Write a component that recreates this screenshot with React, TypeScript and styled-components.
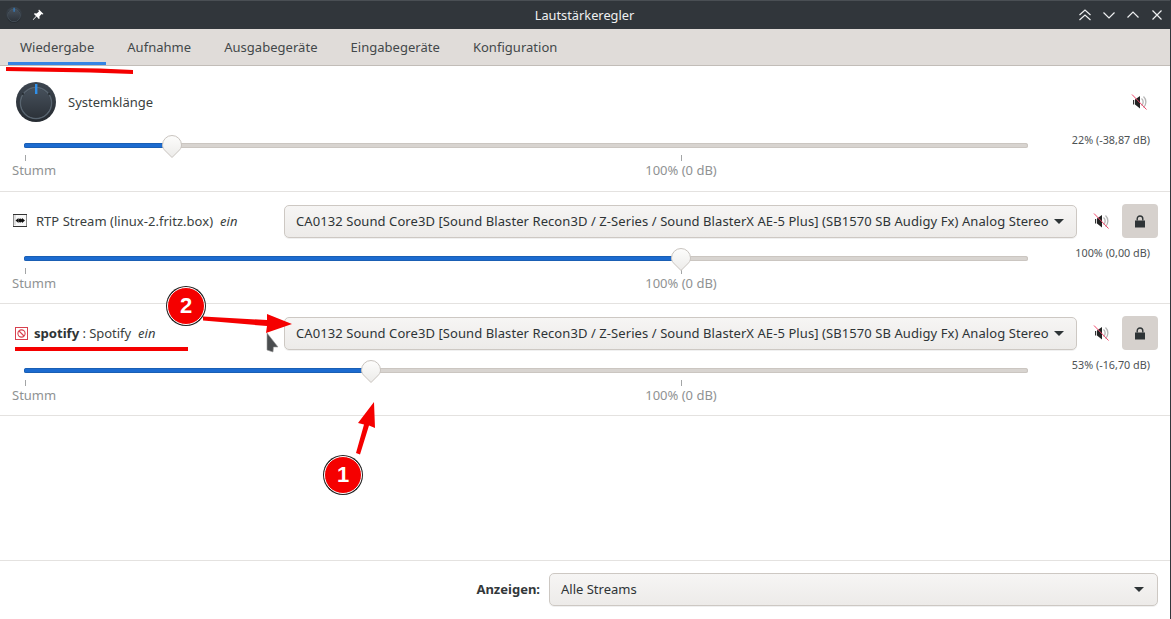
import React from "react";
import styled, { createGlobalStyle } from "styled-components";

const Global = createGlobalStyle`
  html, body { margin: 0; padding: 0; background: #fff; }
  * { box-sizing: border-box; }
`;

const Window = styled.div`
  position: relative;
  width: 1171px;
  height: 619px;
  overflow: hidden;
  display: flex;
  flex-direction: column;
  background: #fff;
  border-right: 1px solid #31363b;
  font-family: "Noto Sans", "Open Sans", sans-serif;
  font-size: 13px;
  color: #3a3f41;
`;

const TitleBar = styled.header`
  height: 29px;
  flex: none;
  background: #31363b;
  border-top: 1px solid #4a4f54;
  display: flex;
  align-items: center;
  padding: 0 7px 0 6px;
  position: relative;
  color: #eff0f1;
`;

const TitleText = styled.div`
  flex: 1;
  text-align: center;
  font-size: 12.8px;
  padding-right: 0;
`;

const TitleLeft = styled.div`
  display: flex;
  align-items: center;
  gap: 10px;
  width: 120px;
`;

const TitleRight = styled.div`
  width: 120px;
  display: flex;
  justify-content: flex-end;
  gap: 12px;
`;

const Tabs = styled.nav`
  height: 37px;
  flex: none;
  background: #e0dcd9;
  border-bottom: 1px solid #c2bdb8;
  display: flex;
  gap: 9px;
  padding-left: 8px;
  letter-spacing: 0.03px;
`;

const Tab = styled.div<{ $active?: boolean }>`
  padding: 0 12px;
  display: flex;
  align-items: center;
  height: 36px;
  color: #43484a;
  box-shadow: ${(p) => (p.$active ? "inset 0 -3px 0 #3584e4" : "none")};
`;

const Content = styled.main`
  flex: 1;
  min-height: 0;
`;

const Row = styled.section<{ $system?: boolean }>`
  padding: ${(p) => (p.$system ? "16px 12px 12px" : "12px 12px 11px")};
  border-bottom: 1px solid #e4e2e0;
`;

const Header = styled.div<{ $system?: boolean }>`
  display: flex;
  align-items: center;
  height: ${(p) => (p.$system ? "40px" : "34px")};
  margin-bottom: ${(p) => (p.$system ? "11px" : "8px")};
  padding-left: ${(p) => (p.$system ? "4px" : "0")};
`;

const SystemName = styled.div`
  flex: 1;
  margin-left: 12px;
  font-size: 13px;
`;

const StreamName = styled.div`
  width: 272px;
  flex: none;
  display: flex;
  align-items: center;
  gap: 8px;
  white-space: nowrap;
  letter-spacing: 0.03px;
`;

const SpotifyText = styled.span`
  letter-spacing: -0.05px;
`;

const Strong = styled.b`
  font-weight: 700;
  font-size: 13.2px;
  color: #2e3436;
`;

const Em = styled.i`
  margin-left: -1px;
`;

const BlockedSlot = styled.span`
  display: flex;
  margin-left: 3px;
  margin-right: -2px;
`;

const Combo = styled.div`
  flex: 1;
  height: 33px;
  margin-top: 1px;
  border: 1px solid #cdc8c3;
  border-radius: 5px;
  background: linear-gradient(#f6f5f4, #edebe9);
  box-shadow: 0 1px 0 rgba(0, 0, 0, 0.06);
  display: flex;
  align-items: center;
  justify-content: space-between;
  padding: 0 12px 1px 11px;
  white-space: nowrap;
  color: #2e3436;
  font-size: 13px;
  letter-spacing: 0.078px;
`;

const Caret = styled.span`
  width: 0;
  height: 0;
  flex: none;
  border-left: 5px solid transparent;
  border-right: 5px solid transparent;
  border-top: 5px solid #2e3436;
`;

const MuteSlot = styled.span<{ $system?: boolean }>`
  display: flex;
  margin: ${(p) => (p.$system ? "0 11px 0 0" : "0 13px 0 16px")};
`;

const LockButton = styled.div`
  width: 36px;
  height: 34px;
  border-radius: 4px;
  background: #d6d1cd;
  display: flex;
  align-items: center;
  justify-content: center;
`;

const SliderLine = styled.div`
  display: flex;
  justify-content: space-between;
`;

const SliderBlock = styled.div`
  width: 1028px;
  flex: none;
`;

const TrackArea = styled.div`
  position: relative;
  height: 22px;
  padding: 10px 0 0 12px;
`;

const Track = styled.div`
  height: 5px;
  width: 1004px;
  margin-top: -0.500px;
  border-radius: 3px;
  background: #d8d4d0;
  box-shadow: inset 0 0 0 1px #cbc6c1;
  overflow: hidden;
  position: relative;
`;

const Fill = styled.div`
  height: 100%;
  background: #1c6bd0;
  box-shadow: inset 0 0 0 1px #1a5fb4;
`;

const Thumb = styled.svg`
  position: absolute;
  top: 0;
  margin-left: -12px;
`;

const Scale = styled.div`
  display: flex;
  color: #8f9293;
  font-size: 13px;
  line-height: 18px;
`;

const Mark = styled.div<{ $center?: boolean }>`
  width: ${(p) => (p.$center ? "100px" : "44px")};
  margin-left: ${(p) => (p.$center ? "575px" : "0")};
  text-align: ${(p) => (p.$center ? "center" : "left")};
  white-space: nowrap;
`;

const Tick = styled.div<{ $center?: boolean }>`
  width: 1px;
  height: 6px;
  background: #a3a5a6;
  margin-left: ${(p) => (p.$center ? "50px" : "13px")};
`;

const ValueLabel = styled.div`
  font-size: 10.800px;
  line-height: 14px;
  color: #4d5254;
  margin-right: 8px;
  white-space: nowrap;
`;

const Footer = styled.footer`
  flex: none;
  height: 59px;
  border-top: 1px solid #e4e2e0;
  padding: 12px 12px 0 0;
  display: flex;
  align-items: flex-start;
  justify-content: flex-end;
`;

const FooterLabel = styled.div`
  font-weight: 700;
  font-size: 13px;
  line-height: 33px;
  margin-right: 9px;
  color: #33383a;
`;

const FooterCombo = styled(Combo)`
  flex: none;
  width: 609px;
  margin-top: 0;
  padding-right: 13px;
  letter-spacing: 0;
`;

const Overlay = styled.svg`
  position: absolute;
  left: 0;
  top: 0;
  pointer-events: none;
`;

const Badge = styled.div<{ $x: number; $y: number }>`
  position: absolute;
  left: ${(p) => p.$x - 19}px;
  top: ${(p) => p.$y - 19}px;
  width: 38px;
  height: 38px;
  border-radius: 50%;
  background: #f50000;
  border: 1.500px solid #fff;
  box-shadow: 0 0 0 1px #222;
  color: #fff;
  font-family: "Liberation Sans", sans-serif;
  font-weight: 700;
  font-size: 22px;
  display: flex;
  align-items: center;
  justify-content: center;
`;

const Knob = ({ size }: { size: number }) => (
  <svg width={size} height={size} viewBox="0 0 40 40">
    <defs>
      <linearGradient id={`ko${size}`} x1="0" y1="0" x2="0" y2="1">
        <stop offset="0" stopColor="#3d4650" />
        <stop offset="1" stopColor="#262b31" />
      </linearGradient>
      <linearGradient id={`k${size}`} x1="0" y1="0" x2="0" y2="1">
        <stop offset="0" stopColor="#46505b" />
        <stop offset="1" stopColor="#2d333a" />
      </linearGradient>
    </defs>
    <circle cx="20" cy="20" r="20" fill={`url(#ko${size})`} />
    <circle cx="20" cy="21" r="15.500" fill="none" stroke="#58646f" strokeWidth="1.500" />
    <circle cx="20" cy="21" r="14.500" fill={`url(#k${size})`} />
    <rect x="19" y="2" width="2.400" height="10" fill="#2f8fe8" />
    <circle cx="7" cy="12" r="0.900" fill="#1f2429" />
    <circle cx="33" cy="12" r="0.900" fill="#1f2429" />
  </svg>
);

const Pin = () => (
  <svg width="12" height="12" viewBox="0 0 12 12" fill="#fff">
    <path d="M7 .5 11.500 5 10.400 5.600 9.600 5 7.400 7.400 7.600 9.400 6.800 10 4.600 7.600 1.200 11 .8 10.600 4 7 1.900 5 2.600 4.200 4.600 4.500 7 2.400 6.400 1.500Z" />
  </svg>
);

const Chevron = ({ kind }: { kind: "dup" | "down" | "up" | "close" }) => (
  <svg width="12" height="12" viewBox="0 0 12 12" fill="none" stroke="#eff0f1" strokeWidth="1.200">
    {kind === "dup" && <path d="M.5 6 6 1l5.500 5M.5 11 6 6l5.500 5" />}
    {kind === "down" && <path d="M.5 3.500 6 9l5.500-5.500" />}
    {kind === "up" && <path d="M.5 8.500 6 3l5.500 5.500" />}
    {kind === "close" && <path d="M1.500 1.500l9 9M10.500 1.500l-9 9" />}
  </svg>
);

const MuteIcon = () => (
  <svg width="16" height="16" viewBox="0 0 16 16">
    <path d="M10.500 4.500a4.500 4.500 0 0 1 0 7M12.500 2.500a7.500 7.500 0 0 1 0 11" fill="none" stroke="#b5b5b5" strokeWidth="1.300" />
    <rect x="2" y="6" width="1.200" height="4.500" fill="#333" />
    <path d="M4 5.500 9 2v12.500L4 10.500Z" fill="#222" />
    <path d="M1 .5 15.500 15.500" stroke="#f0466a" strokeWidth="1" />
  </svg>
);

const Lock = () => (
  <svg width="12" height="13" viewBox="0 0 12 13">
    <path d="M3.200 5.500V3.800a2.800 2.800 0 0 1 5.600 0v1.700" fill="none" stroke="#2e3436" strokeWidth="1.400" />
    <rect x="1" y="5.500" width="10" height="7" fill="#2e3436" />
  </svg>
);

const RtpIcon = () => (
  <svg width="16" height="16" viewBox="0 0 16 16">
    <rect x="1.500" y="1.500" width="13" height="12" fill="#f8f8f8" stroke="#8a8a8a" />
    <path d="M1 1.500h14M1 13.500h14" stroke="#333" strokeWidth="1" />
    <path d="M3 2.500v10" stroke="#999" strokeWidth="1" strokeDasharray="1 1" />
    <path d="M3.500 7.500 6.500 5v5ZM13 7.500 10 5v5Z" fill="#111" />
    <circle cx="8.250" cy="7.500" r="2" fill="#111" />
  </svg>
);

const BlockedIcon = () => (
  <svg width="13" height="13" viewBox="0 0 13 13">
    <rect x=".5" y=".5" width="12" height="12" fill="#fff" stroke="#d8404e" />
    <circle cx="6.500" cy="6.500" r="3.600" fill="none" stroke="#d8404e" strokeWidth="1.100" />
    <path d="M4 4l5 5" stroke="#d8404e" strokeWidth="1.100" />
  </svg>
);

const ThumbShape = ({ x }: { x: number }) => (
  <Thumb width="24" height="26" viewBox="0 0 24 26" style={{ left: x }}>
    <defs>
      <linearGradient id="th" x1="0" y1="0" x2="0" y2="1">
        <stop offset="0" stopColor="#fdfdfc" />
        <stop offset="1" stopColor="#ecebe9" />
      </linearGradient>
    </defs>
    <path d="M12 2.500a9.500 9.500 0 0 1 9.500 9.500c0 3-1.500 4.500-3 6L12 24.500 5.500 18c-1.500-1.500-3-3-3-6A9.500 9.500 0 0 1 12 2.500Z" fill="url(#th)" stroke="#c9c4bf" />
  </Thumb>
);

const Slider = ({ pos, value }: { pos: number; value: string }) => (
  <SliderLine>
    <SliderBlock>
      <TrackArea>
        <Track>
          <Fill style={{ width: pos - 24 }} />
        </Track>
        <ThumbShape x={pos - 12} />
      </TrackArea>
      <Scale>
        <Mark>
          <Tick />
          Stumm
        </Mark>
        <Mark $center>
          <Tick $center />
          100% (0 dB)
        </Mark>
      </Scale>
    </SliderBlock>
    <ValueLabel>{value}</ValueLabel>
  </SliderLine>
);

const DEVICE =
  "CA0132 Sound Core3D [Sound Blaster Recon3D / Z-Series / Sound BlasterX AE-5 Plus] (SB1570 SB Audigy Fx) Analog Stereo";

const Controls = () => (
  <>
    <Combo>
      {DEVICE}
      <Caret />
    </Combo>
    <MuteSlot>
      <MuteIcon />
    </MuteSlot>
    <LockButton>
      <Lock />
    </LockButton>
  </>
);

export default function App() {
  return (
    <Window>
      <Global />
      <TitleBar>
        <TitleLeft>
          <Knob size={16} />
          <Pin />
        </TitleLeft>
        <TitleText>Lautstärkeregler</TitleText>
        <TitleRight>
          <Chevron kind="dup" />
          <Chevron kind="down" />
          <Chevron kind="up" />
          <Chevron kind="close" />
        </TitleRight>
      </TitleBar>
      <Tabs>
        <Tab $active>Wiedergabe</Tab>
        <Tab>Aufnahme</Tab>
        <Tab>Ausgabegeräte</Tab>
        <Tab>Eingabegeräte</Tab>
        <Tab>Konfiguration</Tab>
      </Tabs>
      <Content>
        <Row $system>
          <Header $system>
            <Knob size={40} />
            <SystemName>Systemklänge</SystemName>
            <MuteSlot $system>
              <MuteIcon />
            </MuteSlot>
          </Header>
          <Slider pos={172} value="22% (-38,87 dB)" />
        </Row>
        <Row>
          <Header>
            <StreamName>
              <RtpIcon />
              <span>RTP Stream (linux-2.fritz.box)</span>
              <Em>ein</Em>
            </StreamName>
            <Controls />
          </Header>
          <Slider pos={681} value="100% (0,00 dB)" />
        </Row>
        <Row>
          <Header>
            <StreamName>
              <BlockedSlot>
                <BlockedIcon />
              </BlockedSlot>
              <SpotifyText>
                <Strong>spotify</Strong> : Spotify
              </SpotifyText>
              <Em>ein</Em>
            </StreamName>
            <Controls />
          </Header>
          <Slider pos={371} value="53% (-16,70 dB)" />
        </Row>
      </Content>
      <Footer>
        <FooterLabel>Anzeigen:</FooterLabel>
        <FooterCombo>
          Alle Streams
          <Caret />
        </FooterCombo>
      </Footer>
      <Overlay width="1171" height="619" viewBox="0 0 1171 619">
        <path d="M6 67 L100 68.500 L133 70 L133 74 L90 72.500 L6 71Z" fill="#f50000" />
        <rect x="15" y="347" width="173" height="4" fill="#f50000" />
        <path d="M203 316.500 L267 320 L267 314 L292 324 L266 333 L267 326 L203 320.500Z" fill="#f50000" />
        <path d="M356 453 L360 454.500 L369 425.500 L375 428 L374 402 L358 423 L364 424.500Z" fill="#f50000" />
        <path d="M267 333 L278 347 L273.500 347 L273 352 L267 350Z" fill="#4a4d4f" stroke="#9a9a9a" strokeWidth="0.600" />
      </Overlay>
      <Badge $x={186} $y={306}>2</Badge>
      <Badge $x={343} $y={475}>1</Badge>
    </Window>
  );
}
